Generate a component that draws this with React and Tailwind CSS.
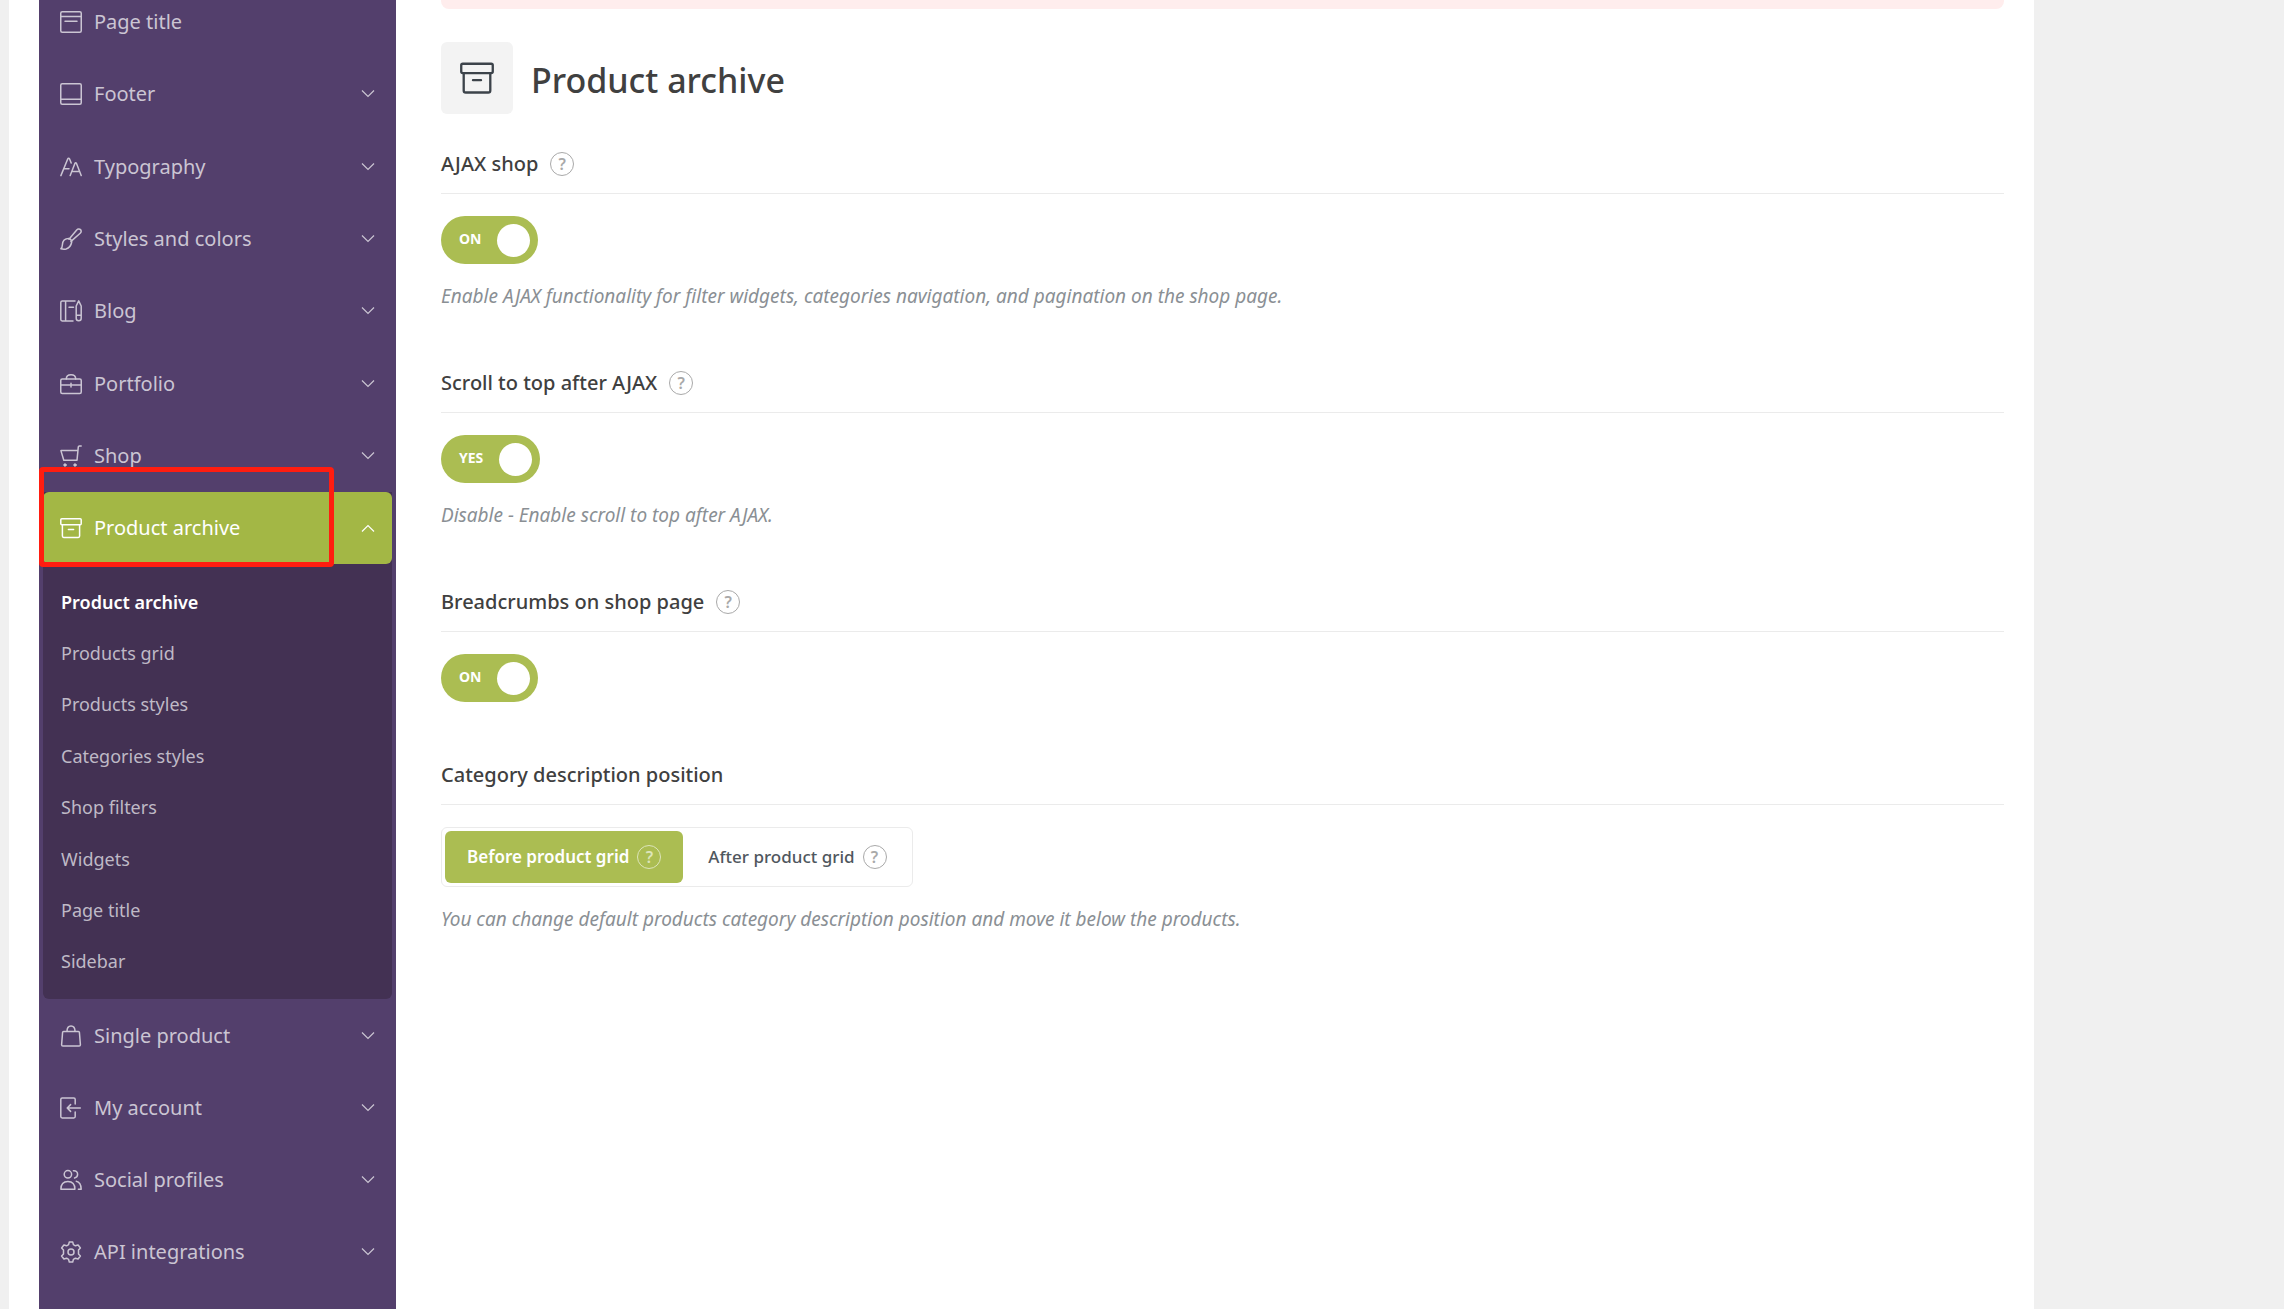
import React from "react";

const icons = {
  pageTitle: (
    <>
      <rect x="0.75" y="0.75" width="20.5" height="20.5" rx="1.5" />
      <path d="M1 5.5h20M5 10.2h12" />
    </>
  ),
  footer: (
    <>
      <rect x="0.75" y="0.75" width="20.5" height="20.5" rx="1.5" />
      <path d="M1 16.3h20" />
    </>
  ),
  typography: (
    <path d="M0.9 19.6 7.6 3.2Q8.6 1.4 9.7 3.2L11.2 7M4 12.8h5M10.2 19.6l4.7-12.2q.8-1.3 1.6 0l4.7 12.2M11.8 15.5h7.8" />
  ),
  brush: (
    <>
      <path d="M9 11.2 16.7 1.9c1.2-1.3 2.9-1.2 3.8-.3 1 1 .9 2.6-.3 3.7L11 13.4" />
      <path d="M7.9 10.6c2.3-.3 4.2 1.7 3.7 3.9-.6 3.2-2.1 5.5-5.5 6.4-1.7.4-3.6.3-5.2-.2 1.3-1 1.4-2.3 1.5-4 .2-3.4 2.300-5.800 5.500-6.100z" />
    </>
  ),
  blog: (
    <>
      <path d="M15 1H2.200Q.8 1 .8 2.400v17.200Q.8 21 2.200 21H13M5.600 1v20M9 7.200h4.500" />
      <path d="M16.200 17.500V6L18.700.9 21.200 6v12.300a2.500 2.500 0 0 1-5 0zM16.200 15.200h5" />
    </>
  ),
  portfolio: (
    <>
      <rect x="0.75" y="6" width="20.5" height="14.6" rx="1.5" />
      <path d="M1 12h20M11 10.300v3.800M6.300 6C6.300 3.300 7.800 1.800 11 1.800S15.700 3.300 15.700 6" />
    </>
  ),
  cart: (
    <>
      <path d="M21.200.9h-1.800q-1 0-1.100 1L17 15.300H3.800L.9 5.600H17.800" />
      <circle cx="5" cy="20" r="1.2" fill="currentColor" strokeWidth="1" />
      <circle cx="15" cy="20" r="1.2" fill="currentColor" strokeWidth="1" />
    </>
  ),
  archive: (
    <>
      <rect x="0.8" y="1.8" width="20.4" height="6" rx="1" />
      <path d="M2.400 7.800v11.300q0 1.300 1.300 1.300h14.600q1.300 0 1.300-1.300V7.800M8.400 12.400h5.200" />
    </>
  ),
  bag: (
    <>
      <path d="M3.600 6.400h14.800q.9 0 1 .9l1 12.400q0 1.300-1.300 1.300H2.900q-1.300 0-1.300-1.300l1-12.400q.1-.9 1-.9z" />
      <path d="M7 6.200C7 2.700 8.400.9 11 .9s4 1.800 4 5.300" />
    </>
  ),
  account: (
    <path d="M15.200 7V2.400Q15.200 1 13.800 1H2.200Q.8 1 .8 2.400v17.200Q.8 21 2.200 21h11.600q1.400 0 1.400-1.400V15M20.300 11H7.300M10.600 7.600 7.200 11l3.400 3.400" />
  ),
  people: (
    <>
      <circle cx="7.9" cy="5.3" r="3.7" />
      <path d="M.9 20.200c0-5.200 2.700-7.800 7-7.800s7 2.600 7 7.800zM13.400 1.700c2.600-.3 4.200 1.300 4.200 3.600 0 1.800-1.200 3.300-3 3.700M16.200 12.200c3.200.6 4.900 3.400 5 8h-2.800" />
    </>
  ),
  gear: (
    <>
      <circle cx="11" cy="11" r="3" />
      <path d="M9.300.9h3.400l.7 2.700 2 1.200 2.700-.8L20.400 7l-1.900 2v4l1.900 2-2.300 3-2.700-.8-2 1.200-.7 2.700H9.300l-.7-2.700-2-1.200-2.700.8-2.300-3 1.900-2V9L1.600 7l2.300-3 2.700.8 2-1.200z" />
    </>
  ),
};

function Icon({ name, className }) {
  return (
    <svg
      viewBox="0 0 22 22"
      className={className}
      fill="none"
      stroke="currentColor"
      strokeWidth="1.5"
      strokeLinecap="round"
      strokeLinejoin="round"
      aria-hidden="true"
    >
      {icons[name]}
    </svg>
  );
}

function Chevron({ up }) {
  return (
    <svg
      viewBox="0 0 14 14"
      className={up ? "size-3.5 shrink-0 rotate-180" : "size-3.5 shrink-0"}
      fill="none"
      stroke="currentColor"
      strokeWidth="1.2"
      aria-hidden="true"
    >
      <path d="M1 3.500l6 6 6-6" />
    </svg>
  );
}

function MenuItem({ icon, label, plain, active }) {
  return (
    <button
      type="button"
      aria-expanded={plain ? undefined : !!active}
      className={
        active
          ? "flex h-full min-h-18 w-full items-center gap-3 rounded-md bg-[#a3b745] px-[17px] text-left text-white"
          : "flex h-full min-h-18 w-full items-center gap-3 px-[17px] text-left text-[#cbc5d3]"
      }
    >
      <Icon name={icon} className="size-[22px] shrink-0" />
      <span className="flex-1">{label}</span>
      {!plain && <Chevron up={active} />}
    </button>
  );
}

const topItems = [
  { icon: "pageTitle", label: "Page title", plain: true },
  { icon: "footer", label: "Footer" },
  { icon: "typography", label: "Typography" },
  { icon: "brush", label: "Styles and colors" },
  { icon: "blog", label: "Blog" },
  { icon: "portfolio", label: "Portfolio" },
  { icon: "cart", label: "Shop" },
];

const subItems = [
  "Product archive",
  "Products grid",
  "Products styles",
  "Categories styles",
  "Shop filters",
  "Widgets",
  "Page title",
  "Sidebar",
];

const bottomItems = [
  { icon: "bag", label: "Single product" },
  { icon: "account", label: "My account" },
  { icon: "people", label: "Social profiles" },
  { icon: "gear", label: "API integrations" },
];

function Sidebar() {
  return (
    <nav className="-mt-3.5 w-[357px] shrink-0 bg-[#533f6c] px-1 text-xl leading-6">
      <ul className="grid min-h-[506px] auto-rows-fr">
        {topItems.map((item) => (
          <li key={item.label}>
            <MenuItem {...item} />
          </li>
        ))}
      </ul>
      <div className="relative rounded-b-md bg-[#433153]">
        <MenuItem icon="archive" label="Product archive" active />
        <span className="pointer-events-none absolute -top-[25px] -left-1 h-[100px] w-[295px] rounded-sm border-5 border-[#ff1d10]" />
        <ul className="grid min-h-[435px] auto-rows-fr py-3 text-lg">
          {subItems.map((label, i) => (
            <li key={label} className="flex items-center px-[18px]">
              <a
                href="#"
                className={i === 0 ? "font-semibold text-white" : "text-[#bfb9c6]"}
              >
                {label}
              </a>
            </li>
          ))}
        </ul>
      </div>
      <ul className="pt-px">
        {bottomItems.map((item) => (
          <li key={item.label}>
            <MenuItem {...item} />
          </li>
        ))}
      </ul>
    </nav>
  );
}

function Help({ light }) {
  return (
    <span
      role="img"
      aria-label="Help"
      className={
        light
          ? "flex size-6 items-center justify-center rounded-full border border-[#dde5ba] text-base leading-none font-semibold text-[#dde5ba]"
          : "flex size-6 items-center justify-center rounded-full border border-[#a9a9a9] text-base leading-none font-semibold text-[#a9a9a9]"
      }
    >
      ?
    </span>
  );
}

function Field({ title, help, description, children }) {
  return (
    <section className="mb-[61px]">
      <div className="mb-[22px] flex items-center gap-3 border-b border-[#ebebeb] pb-[17px]">
        <h2 className="text-xl leading-6 font-medium text-[#404040]">{title}</h2>
        {help && <Help />}
      </div>
      {children}
      {description && (
        <p className="mt-[18px] text-[19px] leading-7 text-[#8a8f94] italic">{description}</p>
      )}
    </section>
  );
}

function Toggle({ label, name }) {
  return (
    <label className="flex h-12 w-fit items-center gap-4 rounded-full bg-[#abbd52] pr-2 pl-[18px] text-sm font-bold text-white">
      <input type="checkbox" defaultChecked aria-label={name} className="sr-only" />
      <span className="pb-0.5 leading-6">{label}</span>
      <span className="size-[33px] rounded-full bg-white" />
    </label>
  );
}

export default function App() {
  return (
    <div className="flex min-h-screen overflow-hidden bg-[#f0f0f0] pr-[250px] pl-[9px] font-['Noto_Sans',sans-serif]">
      <div className="flex flex-1 bg-white pl-[30px]">
        <Sidebar />
        <main className="flex-1 pr-[30px] pl-[45px]">
          <div className="h-[9px] rounded-b-lg bg-[#ffeded]" />
          <header className="mt-[33px] mb-[38px] flex items-center gap-[18px]">
            <div className="flex size-18 items-center justify-center rounded-md bg-[#f3f3f3] text-[#3c434a]">
              <Icon name="archive" className="size-[34px]" />
            </div>
            <h1 className="pt-1 text-[34px] leading-[48px] font-medium text-[#404040]">Product archive</h1>
          </header>
          <Field
            title="AJAX shop"
            help
            description="Enable AJAX functionality for filter widgets, categories navigation, and pagination on the shop page."
          >
            <Toggle label="ON" name="AJAX shop" />
          </Field>
          <Field
            title="Scroll to top after AJAX"
            help
            description="Disable - Enable scroll to top after AJAX."
          >
            <Toggle label="YES" name="Scroll to top after AJAX" />
          </Field>
          <Field title="Breadcrumbs on shop page" help>
            <Toggle label="ON" name="Breadcrumbs on shop page" />
          </Field>
          <Field
            title="Category description position"
            description="You can change default products category description position and move it below the products."
          >
            <div
              role="radiogroup"
              aria-label="Category description position"
              className="flex w-fit gap-[3px] rounded-md border border-[#ebebeb] p-[3px] text-[17px] leading-6"
            >
              <label className="flex h-[52px] items-center gap-2 rounded-md bg-[#abbd52] px-[22px] font-semibold text-white">
                <input type="radio" name="position" defaultChecked className="sr-only" />
                Before product grid
                <Help light />
              </label>
              <label className="flex h-[52px] items-center gap-2 rounded-md px-[22px] font-medium text-[#50575e]">
                <input type="radio" name="position" className="sr-only" />
                After product grid
                <Help />
              </label>
            </div>
          </Field>
        </main>
      </div>
    </div>
  );
}
